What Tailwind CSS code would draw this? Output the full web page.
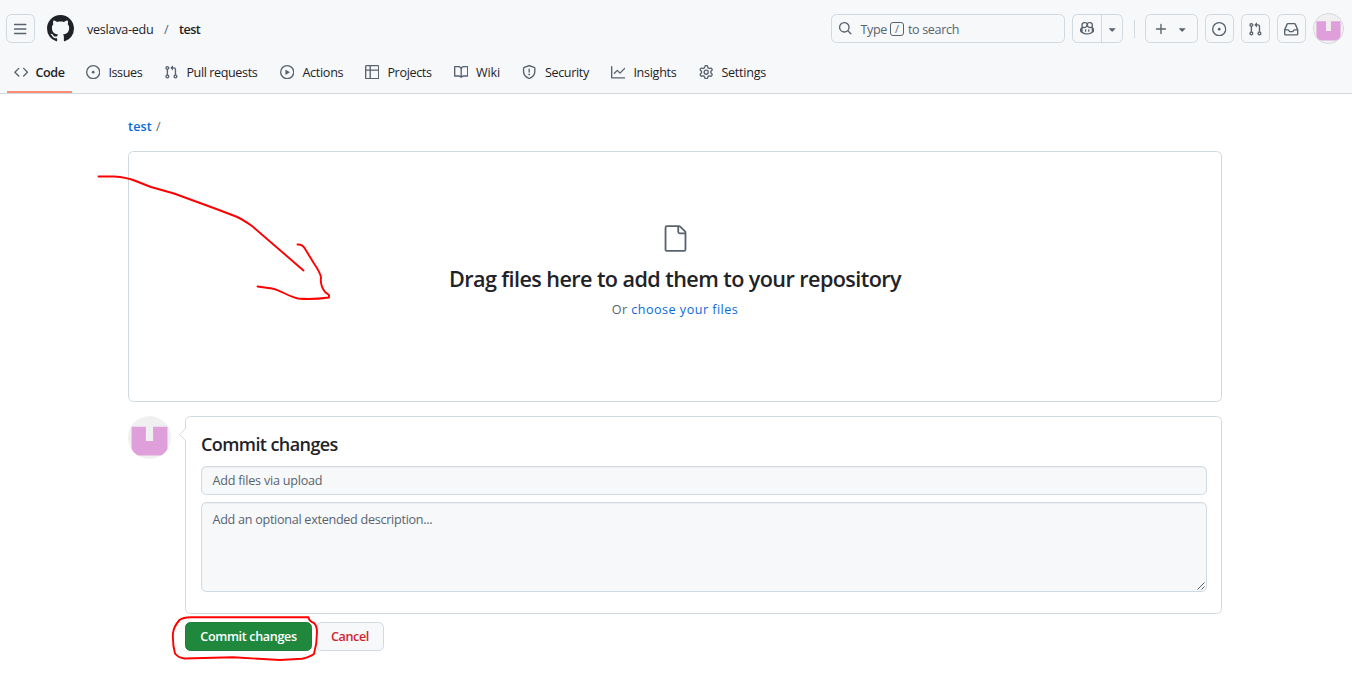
<!DOCTYPE html>
<html lang="en">
<head>
<meta charset="utf-8">
<title>Upload files</title>
<script src="https://cdn.jsdelivr.net/npm/@tailwindcss/browser@4"></script>
</head>
<body class="relative h-[680px] w-[1352px] overflow-hidden bg-white font-['Open_Sans','Noto_Sans',sans-serif] text-[12.6px] leading-[18px] text-[#1f2328]">
<svg class="hidden">
  <symbol id="issue" viewBox="0 0 16 16"><path d="M8 9.5a1.5 1.5 0 1 0 0-3 1.5 1.5 0 0 0 0 3Z"/><path d="M8 0a8 8 0 1 1 0 16A8 8 0 0 1 8 0ZM1.5 8a6.5 6.5 0 1 0 13 0 6.5 6.5 0 0 0-13 0Z"/></symbol>
  <symbol id="pr" viewBox="0 0 16 16"><path d="M1.5 3.25a2.25 2.25 0 1 1 3 2.122v5.256a2.251 2.251 0 1 1-1.5 0V5.372A2.25 2.25 0 0 1 1.5 3.25Zm5.677-.177L9.573.677A.25.25 0 0 1 10 .854V2.5h1A2.5 2.5 0 0 1 13.5 5v5.628a2.251 2.251 0 1 1-1.5 0V5a1 1 0 0 0-1-1h-1v1.646a.25.25 0 0 1-.427.177L7.177 3.427a.25.25 0 0 1 0-.354ZM3.75 2.5a.75.75 0 1 0 0 1.5.75.75 0 0 0 0-1.5Zm0 9.5a.75.75 0 1 0 0 1.5.75.75 0 0 0 0-1.5Zm8.25.75a.75.75 0 1 0 1.5 0 .75.75 0 0 0-1.5 0Z"/></symbol>
  <symbol id="caret" viewBox="0 0 16 16"><path d="m4.427 7.427 3.396 3.396a.25.25 0 0 0 .354 0l3.396-3.396A.25.25 0 0 0 11.396 7H4.604a.25.25 0 0 0-.177.427Z"/></symbol>
  <symbol id="identicon" viewBox="0 0 42 42"><path fill="#f0f0f0" d="M0 0h42v42H0z"/><path fill="#df9fdb" d="M3.5 10.5h14v14h7v-14h14v28h-35z"/></symbol>
</svg>

<header class="h-[94px] border-b border-[#d1d9e0] bg-[#f6f8fa]">
  <div class="flex h-[57px] items-center pl-1.5 pr-2">
    <button class="flex size-[29px] items-center justify-center rounded-[5.4px] border border-[#d1d9e0]">
      <svg class="mt-px size-[14.4px] fill-[#59636e]" viewBox="0 0 16 16"><path d="M1 2.75A.75.75 0 0 1 1.75 2h12.5a.75.75 0 0 1 0 1.5H1.75A.75.75 0 0 1 1 2.75Zm0 5A.75.75 0 0 1 1.75 7h12.5a.75.75 0 0 1 0 1.5H1.75A.75.75 0 0 1 1 7.75ZM1.75 12h12.5a.75.75 0 0 1 0 1.5H1.75a.75.75 0 0 1 0-1.5Z"/></svg>
    </button>
    <svg class="ml-3 size-[27px] fill-[#1f2328]" viewBox="0 0 16 16"><path d="M8 0c4.42 0 8 3.58 8 8a8.013 8.013 0 0 1-5.45 7.59c-.4.08-.55-.17-.55-.38 0-.27.01-1.13.01-2.2 0-.75-.25-1.23-.54-1.48 1.78-.2 3.65-.88 3.65-3.95 0-.88-.31-1.59-.82-2.15.08-.2.36-1.02-.08-2.12 0 0-.67-.22-2.2.82-.64-.18-1.32-.27-2-.27-.68 0-1.36.09-2 .27-1.53-1.03-2.2-.82-2.2-.82-.44 1.1-.16 1.92-.08 2.12-.51.56-.82 1.28-.82 2.15 0 3.06 1.86 3.75 3.64 3.95-.23.2-.44.55-.51 1.07-.46.21-1.61.55-2.33-.66-.15-.24-.6-.83-1.23-.82-.67.01-.27.38.01.53.34.19.73.9.82 1.13.16.45.68 1.31 2.69.94 0 .67.01 1.3.01 1.49 0 .21-.15.45-.55.38A7.995 7.995 0 0 1 0 8c0-4.42 3.58-8 8-8Z"/></svg>
    <div class="ml-[13px] mt-0.5 flex whitespace-nowrap">
      <span class="w-[77px] tracking-[-0.27px]">veslava-edu</span>
      <span class="w-[15px] text-[#59636e]">/</span>
      <span class="font-semibold tracking-[-0.55px]">test</span>
    </div>
    <div class="ml-auto flex h-[29px] w-[234px] items-center rounded-[5.4px] border border-[#d1d9e0] pl-1.5 text-[#59636e]">
      <svg class="size-[14.4px] fill-[#59636e]" viewBox="0 0 16 16"><path d="M10.68 11.74a6 6 0 0 1-7.922-8.982 6 6 0 0 1 8.982 7.922l3.04 3.04a.749.749 0 0 1-.326 1.275.749.749 0 0 1-.734-.215ZM11.5 7a4.499 4.499 0 1 0-8.997 0A4.499 4.499 0 0 0 11.5 7Z"/></svg>
      <span class="ml-[8px] mt-0.5 w-[29.5px] tracking-[-0.35px]">Type</span>
      <kbd class="mt-px flex h-[14px] w-[14px] items-center justify-center rounded-[3px] border border-[#59636e] font-['Open_Sans'] text-[10.8px]">/</kbd>
      <span class="ml-1 mt-0.5 tracking-[-0.35px]">to search</span>
    </div>
    <div class="ml-[7px] flex h-[29px] w-[51px] rounded-[5.4px] border border-[#d1d9e0]">
      <span class="flex w-[29px] items-center justify-center border-r border-[#d1d9e0]"><svg class="size-[14.4px] fill-[#59636e]" viewBox="0 0 16 16"><path d="M7.998 15.035c-4.562 0-7.873-2.914-7.998-3.749V9.338c.085-.628.677-1.686 1.588-2.065.013-.07.024-.143.036-.218.029-.183.06-.384.126-.612-.201-.508-.254-1.084-.254-1.656 0-.87.128-1.769.693-2.484.579-.733 1.494-1.124 2.724-1.261 1.206-.134 2.262.034 2.944.765.05.053.096.108.139.165.044-.057.094-.112.143-.165.682-.731 1.738-.899 2.944-.765 1.23.137 2.145.528 2.724 1.261.566.715.693 1.614.693 2.484 0 .572-.053 1.148-.254 1.656.066.228.098.429.126.612.012.076.024.148.037.218.924.385 1.522 1.471 1.591 2.095v1.872c0 .766-3.351 3.795-8.002 3.795Zm0-1.485c2.28 0 4.584-1.11 5.002-1.433V7.862l-.023-.116c-.49.21-1.075.291-1.727.291-1.146 0-2.059-.327-2.71-.991A3.222 3.222 0 0 1 8 6.303a3.24 3.24 0 0 1-.544.743c-.65.664-1.563.991-2.71.991-.652 0-1.236-.081-1.727-.291l-.023.116v4.255c.419.323 2.722 1.433 5.002 1.433ZM6.762 2.83c-.193-.206-.637-.413-1.682-.297-1.019.113-1.479.404-1.713.7-.247.312-.369.789-.369 1.554 0 .793.129 1.171.308 1.371.162.181.519.379 1.442.379.853 0 1.339-.235 1.638-.54.315-.322.527-.827.617-1.553.117-.935-.037-1.395-.241-1.614Zm4.155-.297c-1.044-.116-1.488.091-1.681.297-.204.219-.359.679-.242 1.614.091.726.303 1.231.618 1.553.299.305.784.54 1.638.54.922 0 1.28-.198 1.442-.379.179-.2.308-.578.308-1.371 0-.765-.123-1.242-.37-1.554-.233-.296-.693-.587-1.713-.7Z"/><path d="M6.25 9.037a.75.75 0 0 1 .75.75v1.501a.75.75 0 0 1-1.5 0V9.787a.75.75 0 0 1 .75-.75Zm4.25.75v1.501a.75.75 0 0 1-1.5 0V9.787a.75.75 0 0 1 1.5 0Z"/></svg></span>
      <span class="flex flex-1 items-center justify-center"><svg class="mt-px size-[14.4px] fill-[#59636e]"><use href="#caret"/></svg></span>
    </div>
    <div class="ml-[11px] h-[18px] w-px bg-[#d1d9e0]"></div>
    <div class="ml-[10px] flex h-[29px] w-[53px] items-center rounded-[5.4px] border border-[#d1d9e0] pl-2">
      <svg class="mt-px size-[14.4px] fill-[#59636e]" viewBox="0 0 16 16"><path d="M7.75 2a.75.75 0 0 1 .75.75V7h4.25a.75.75 0 0 1 0 1.5H8.5v4.25a.75.75 0 0 1-1.5 0V8.5H2.75a.75.75 0 0 1 0-1.5H7V2.75A.75.75 0 0 1 7.75 2Z"/></svg>
      <svg class="ml-[7px] mt-px size-[14.4px] fill-[#59636e]"><use href="#caret"/></svg>
    </div>
    <button class="ml-[7px] flex size-[29px] items-center justify-center rounded-[5.4px] border border-[#d1d9e0]"><svg class="mt-px size-[14.4px] fill-[#59636e]"><use href="#issue"/></svg></button>
    <button class="ml-[7px] flex size-[29px] items-center justify-center rounded-[5.4px] border border-[#d1d9e0]"><svg class="mt-px size-[14.4px] fill-[#59636e]"><use href="#pr"/></svg></button>
    <button class="ml-[7px] flex size-[29px] items-center justify-center rounded-[5.4px] border border-[#d1d9e0]"><svg class="mt-px size-[14.4px] fill-[#59636e]" viewBox="0 0 16 16"><path d="M2.8 2.06A1.75 1.75 0 0 1 4.41 1h7.18c.7 0 1.333.417 1.61 1.06l2.74 6.395c.04.093.06.194.06.295v4.5A1.75 1.75 0 0 1 14.25 15H1.75A1.75 1.75 0 0 1 0 13.25v-4.5c0-.101.02-.202.06-.295Zm1.61.44a.25.25 0 0 0-.23.152L1.887 8H4.75a.75.75 0 0 1 .6.3L6.625 10h2.75l1.275-1.7a.75.75 0 0 1 .6-.3h2.863L11.82 2.652a.25.25 0 0 0-.23-.152Zm10.09 7h-2.875l-1.275 1.7a.75.75 0 0 1-.6.3h-3.5a.75.75 0 0 1-.6-.3L4.375 9.5H1.5v3.75c0 .138.112.25.25.25h12.5a.25.25 0 0 0 .25-.25Z"/></svg></button>
    <span class="ml-[7px] size-[31px] overflow-hidden rounded-full border border-[#d1d1d6]"><svg class="size-full"><use href="#identicon"/></svg></span>
  </div>

  <nav class="flex h-[37px] whitespace-nowrap pl-[7px]">
    <a class="flex h-[36px] w-[65px] items-start border-b-2 border-[#fd8c73] pl-[7px] pt-[7px] font-semibold"><svg class="mt-[1px] size-[14.4px] shrink-0 fill-[#59636e]" viewBox="0 0 16 16"><path d="m11.28 3.22 4.25 4.25a.75.75 0 0 1 0 1.06l-4.25 4.25a.749.749 0 0 1-1.275-.326.749.749 0 0 1 .215-.734L13.94 8l-3.72-3.72a.749.749 0 0 1 .326-1.275.749.749 0 0 1 .734.215Zm-6.56 0a.751.751 0 0 1 1.042.018.751.751 0 0 1 .018 1.042L2.06 8l3.72 3.72a.749.749 0 0 1-.326 1.275.749.749 0 0 1-.734-.215L.47 8.53a.75.75 0 0 1 0-1.06Z"/></svg><span class="ml-[7px] tracking-[-0.4px]">Code</span></a>
    <div class="flex pl-[14px] pt-[7px]">
      <a class="flex w-[78px]"><svg class="mt-[1px] size-[14.4px] shrink-0 fill-[#59636e]"><use href="#issue"/></svg><span class="ml-[8px] tracking-[-0.4px]">Issues</span></a>
      <a class="flex w-[116px]"><svg class="mt-[1px] size-[14.4px] shrink-0 fill-[#59636e]"><use href="#pr"/></svg><span class="ml-[8px] tracking-[-0.4px]">Pull requests</span></a>
      <a class="flex w-[85px]"><svg class="mt-[1px] size-[14.4px] shrink-0 fill-[#59636e]" viewBox="0 0 16 16"><path d="M8 0a8 8 0 1 1 0 16A8 8 0 0 1 8 0ZM1.5 8a6.5 6.5 0 1 0 13 0 6.5 6.5 0 0 0-13 0Zm4.879-2.773 4.264 2.559a.25.25 0 0 1 0 .428l-4.264 2.559A.25.25 0 0 1 6 10.559V5.442a.25.25 0 0 1 .379-.215Z"/></svg><span class="ml-[8px] tracking-[-0.3px]">Actions</span></a>
      <a class="flex w-[89px]"><svg class="mt-[1px] size-[14.4px] shrink-0 fill-[#59636e]" viewBox="0 0 16 16"><path d="M0 1.75C0 .784.784 0 1.75 0h12.5C15.216 0 16 .784 16 1.75v12.5A1.75 1.75 0 0 1 14.25 16H1.75A1.75 1.75 0 0 1 0 14.25ZM6.5 6.5v8h7.75a.25.25 0 0 0 .25-.25V6.5Zm8-1.5V1.75a.25.25 0 0 0-.25-.25H6.5V5Zm-13 1.5v7.75c0 .138.112.25.25.25H5v-8ZM5 5V1.5H1.75a.25.25 0 0 0-.25.25V5Z"/></svg><span class="ml-[8px] tracking-[-0.35px]">Projects</span></a>
      <a class="flex w-[68px]"><svg class="mt-[1px] size-[14.4px] shrink-0 fill-[#59636e]" viewBox="0 0 16 16"><path d="M0 1.75A.75.75 0 0 1 .75 1h4.253c1.227 0 2.317.59 3 1.501A3.743 3.743 0 0 1 11.006 1h4.245a.75.75 0 0 1 .75.75v10.5a.75.75 0 0 1-.75.75h-4.507a2.25 2.25 0 0 0-1.591.659l-.622.621a.75.75 0 0 1-1.06 0l-.622-.621A2.25 2.25 0 0 0 5.258 13H.75a.75.75 0 0 1-.75-.75Zm7.251 10.324.004-5.073-.002-2.253A2.25 2.25 0 0 0 5.003 2.5H1.5v9h3.757a3.75 3.75 0 0 1 1.994.574ZM8.755 4.75l-.004 7.322a3.752 3.752 0 0 1 1.992-.572H14.5v-9h-3.495a2.25 2.25 0 0 0-2.25 2.25Z"/></svg><span class="ml-[7.5px] tracking-[-0.1px]">Wiki</span></a>
      <a class="flex w-[89px]"><svg class="mt-[1px] size-[14.4px] shrink-0 fill-[#59636e]" viewBox="0 0 16 16"><path d="M7.467.133a1.748 1.748 0 0 1 1.066 0l5.25 1.68A1.75 1.75 0 0 1 15 3.48V7c0 1.566-.32 3.182-1.303 4.682-.983 1.498-2.585 2.813-5.032 3.855a1.697 1.697 0 0 1-1.33 0c-2.447-1.042-4.049-2.357-5.032-3.855C1.32 10.182 1 8.566 1 7V3.48a1.75 1.75 0 0 1 1.217-1.667Zm.61 1.429a.25.25 0 0 0-.153 0l-5.25 1.68a.25.25 0 0 0-.174.238V7c0 1.358.275 2.666 1.057 3.86.784 1.194 2.121 2.34 4.366 3.297a.196.196 0 0 0 .154 0c2.245-.956 3.582-2.104 4.366-3.298C13.225 9.666 13.5 8.36 13.5 7V3.48a.251.251 0 0 0-.174-.237l-5.25-1.68ZM8.75 4.75v3a.75.75 0 0 1-1.5 0v-3a.75.75 0 0 1 1.5 0ZM9 10.5a1 1 0 1 1-2 0 1 1 0 0 1 2 0Z"/></svg><span class="ml-[8.5px] tracking-[-0.35px]">Security</span></a>
      <a class="flex w-[88px]"><svg class="mt-[1px] size-[14.4px] shrink-0 fill-[#59636e]" viewBox="0 0 16 16"><path d="M1.5 1.75V13.5h13.75a.75.75 0 0 1 0 1.5H.75a.75.75 0 0 1-.75-.75V1.75a.75.75 0 0 1 1.5 0Zm14.28 2.53-5.25 5.25a.75.75 0 0 1-1.06 0L7 7.06 4.28 9.78a.751.751 0 0 1-1.042-.018.751.751 0 0 1-.018-1.042l3.25-3.25a.75.75 0 0 1 1.06 0L10 7.94l4.72-4.72a.751.751 0 0 1 1.042.018.751.751 0 0 1 .018 1.042Z"/></svg><span class="ml-[8px] tracking-[-0.3px]">Insights</span></a>
      <a class="flex"><svg class="mt-[1px] size-[14.4px] shrink-0 fill-[#59636e]" viewBox="0 0 16 16"><path d="M8 0a8.2 8.2 0 0 1 .701.031C9.444.095 9.99.645 10.16 1.29l.288 1.107c.018.066.079.158.212.224.231.114.454.243.668.386.123.082.233.09.299.071l1.103-.303c.644-.176 1.392.021 1.82.63.27.385.506.792.704 1.218.315.675.111 1.422-.364 1.891l-.814.806c-.049.048-.098.147-.088.294.016.257.016.515 0 .772-.01.147.038.246.088.294l.814.806c.475.469.679 1.216.364 1.891a7.977 7.977 0 0 1-.704 1.217c-.428.61-1.176.807-1.82.63l-1.102-.302c-.067-.019-.177-.011-.3.071a5.909 5.909 0 0 1-.668.386c-.133.066-.194.158-.211.224l-.29 1.106c-.168.646-.715 1.196-1.458 1.26a8.006 8.006 0 0 1-1.402 0c-.743-.064-1.289-.614-1.458-1.26l-.289-1.106c-.018-.066-.079-.158-.212-.224a5.738 5.738 0 0 1-.668-.386c-.123-.082-.233-.09-.299-.071l-1.103.303c-.644.176-1.392-.021-1.82-.63a8.12 8.12 0 0 1-.704-1.218c-.315-.675-.111-1.422.363-1.891l.815-.806c.05-.048.098-.147.088-.294a6.214 6.214 0 0 1 0-.772c.01-.147-.038-.246-.088-.294l-.815-.806C.635 6.045.431 5.298.746 4.623a7.92 7.92 0 0 1 .704-1.217c.428-.61 1.176-.807 1.82-.63l1.102.302c.067.019.177.011.3-.071.214-.143.437-.272.668-.386.133-.066.194-.158.211-.224l.29-1.106C6.009.645 6.556.095 7.299.03 7.53.01 7.764 0 8 0Zm-.571 1.525c-.036.003-.108.036-.137.146l-.289 1.105c-.147.561-.549.967-.998 1.189-.173.086-.34.183-.5.29-.417.278-.97.423-1.529.27l-1.103-.303c-.109-.03-.175.016-.195.045-.22.312-.412.644-.573.99-.014.031-.021.11.059.19l.815.806c.411.406.562.957.53 1.456a4.709 4.709 0 0 0 0 .582c.032.499-.119 1.05-.53 1.456l-.815.806c-.081.08-.073.159-.059.19.162.346.353.677.573.989.02.03.085.076.195.046l1.102-.303c.56-.153 1.113-.008 1.53.27.161.107.328.204.501.29.447.222.85.629.997 1.189l.289 1.105c.029.109.101.143.137.146a6.6 6.6 0 0 0 1.142 0c.036-.003.108-.036.137-.146l.289-1.105c.147-.561.549-.967.998-1.189.173-.086.34-.183.5-.29.417-.278.97-.423 1.529-.27l1.103.303c.109.029.175-.016.195-.045.22-.313.411-.644.573-.99.014-.031.021-.11-.059-.19l-.815-.806c-.411-.406-.562-.957-.53-1.456a4.709 4.709 0 0 0 0-.582c-.032-.499.119-1.05.53-1.456l.815-.806c.081-.08.073-.159.059-.19a6.464 6.464 0 0 0-.573-.989c-.02-.03-.085-.076-.195-.046l-1.102.303c-.56.153-1.113.008-1.53-.27a4.44 4.44 0 0 0-.501-.29c-.447-.222-.85-.629-.997-1.189l-.289-1.105c-.029-.11-.101-.143-.137-.146a6.6 6.6 0 0 0-1.142 0ZM11 8a3 3 0 1 1-6 0 3 3 0 0 1 6 0ZM9.5 8a1.5 1.5 0 1 0-3.001.001A1.5 1.5 0 0 0 9.5 8Z"/></svg><span class="ml-[8px] tracking-[-0.25px]">Settings</span></a>
    </div>
  </nav>
</header>

<main class="ml-[128px] w-[1094px] pt-[24px]">
  <div class="flex h-[18px] gap-1"><a class="font-semibold tracking-[0.15px] text-[#0969da]">test</a><span class="text-[#59636e]">/</span></div>
  <section class="mt-[15px] flex h-[251px] flex-col items-center rounded-[5.4px] border border-[#d1d9e0] pt-[72px]">
    <svg class="size-[29px] fill-[#59636e]" viewBox="0 0 24 24"><path d="M3 3a2 2 0 0 1 2-2h9.982a2 2 0 0 1 1.414.586l4.018 4.018A2 2 0 0 1 21 7.018V21a2 2 0 0 1-2 2H4.75A1.75 1.75 0 0 1 3 21.25Zm2-.5a.5.5 0 0 0-.5.5v18.25c0 .138.112.25.25.25H19a.5.5 0 0 0 .5-.5V8.5h-4a2 2 0 0 1-2-2v-4Zm10 0v4a.5.5 0 0 0 .5.5h4a.5.5 0 0 0-.146-.336l-4.018-4.018A.5.5 0 0 0 15 2.5Z"/></svg>
    <h1 class="mt-[9px] whitespace-nowrap text-[21.6px] font-semibold leading-[34px] tracking-[-0.58px]">Drag files here to add them to your repository</h1>
    <p class="mt-[5px] tracking-[0.47px] text-[#59636e]">Or <a class="text-[#0969da]">choose your files</a></p>
  </section>

  <section class="mt-[14px] flex">
    <svg class="size-[43px] shrink-0 rounded-full"><use href="#identicon"/></svg>
    <div class="relative ml-[14px] h-[198px] w-[1037px] rounded-[5.4px] border border-[#d1d9e0] pl-[15px] pr-[14px] pt-[15px]">
      <svg class="absolute -left-[7px] top-[10px] h-[15px] w-[8px]" viewBox="0 0 8 15"><path d="M8 0v15L.7 7.5Z" fill="#fff"/><path d="M7 .8.7 7.5 7 14.2" fill="none" stroke="#d1d9e0"/></svg>
      <h2 class="h-[34px] text-[18px] font-semibold leading-[24px] tracking-[-0.58px]">Commit changes</h2>
      <div class="flex h-[29px] items-center rounded-[5.4px] border border-[#d1d9e0] bg-[#f6f8fa] pl-[10.5px] tracking-[-0.22px] text-[#59636e] shadow-[inset_0_1px_0_#1f23280a]">Add files via upload</div>
      <div class="relative mt-[7px] h-[90px] rounded-[5.4px] border border-[#d1d9e0] bg-[#f6f8fa] pl-[10.5px] pt-[8px] tracking-[-0.28px] text-[#59636e] shadow-[inset_0_1px_0_#1f23280a]">Add an optional extended description...
        <svg class="absolute bottom-[1px] right-[1px] size-[8px]" viewBox="0 0 8 8"><path d="M.5 7.5l7-7M4.5 7.5l3-3" stroke="#4b4b4b" stroke-width=".9"/></svg>
      </div>
    </div>
  </section>
  <div class="ml-[57px] mt-2 flex gap-[4px]">
    <button class="flex h-[29px] w-[127px] items-center justify-center whitespace-nowrap rounded-[5.4px] border border-[#1f7e3a] bg-[#1f883d] font-semibold tracking-[-0.35px] text-white">Commit changes</button>
    <button class="flex h-[29px] w-[68px] items-center justify-center rounded-[5.4px] border border-[#d1d9e0] bg-[#f6f8fa] font-semibold tracking-[-0.4px] text-[#d1242f]">Cancel</button>
  </div>
</main>

<!-- Hand-drawn annotations over the page -->
<svg class="pointer-events-none absolute inset-0 h-[680px] w-[1352px]" fill="none" stroke="#f00" stroke-width="1.9" stroke-linecap="round" stroke-linejoin="round">
  <path d="M98.500 176.500H114C123 177 131 179 137 181.500L151 187L174 193.500L215 208.500L236 216.500Q242 219 252 226L303.500 270.500"/>
  <path d="M297.500 244.500Q302 244 304.500 248L314 263.500Q320.500 273 321 277.500C320 284 322 288 325 292L329 295V297.500C318 299 308 299.500 298 298.500C290 297 280 290 272 288.500L257.500 286.500"/>
  <path d="M308.500 617.300L191 617.300Q183 617.500 179.500 620C176 624 173.500 628 173 633C172.500 641 173.500 648 175 653.500C177 656 180 658 184.500 658.500L233 657.300L280 660L302 658.800Q310 657 314 654C316 647 317 640 317 632Q317 626 314 623Q309 621 308.500 617.300"/>
</svg>
</body>
</html>
